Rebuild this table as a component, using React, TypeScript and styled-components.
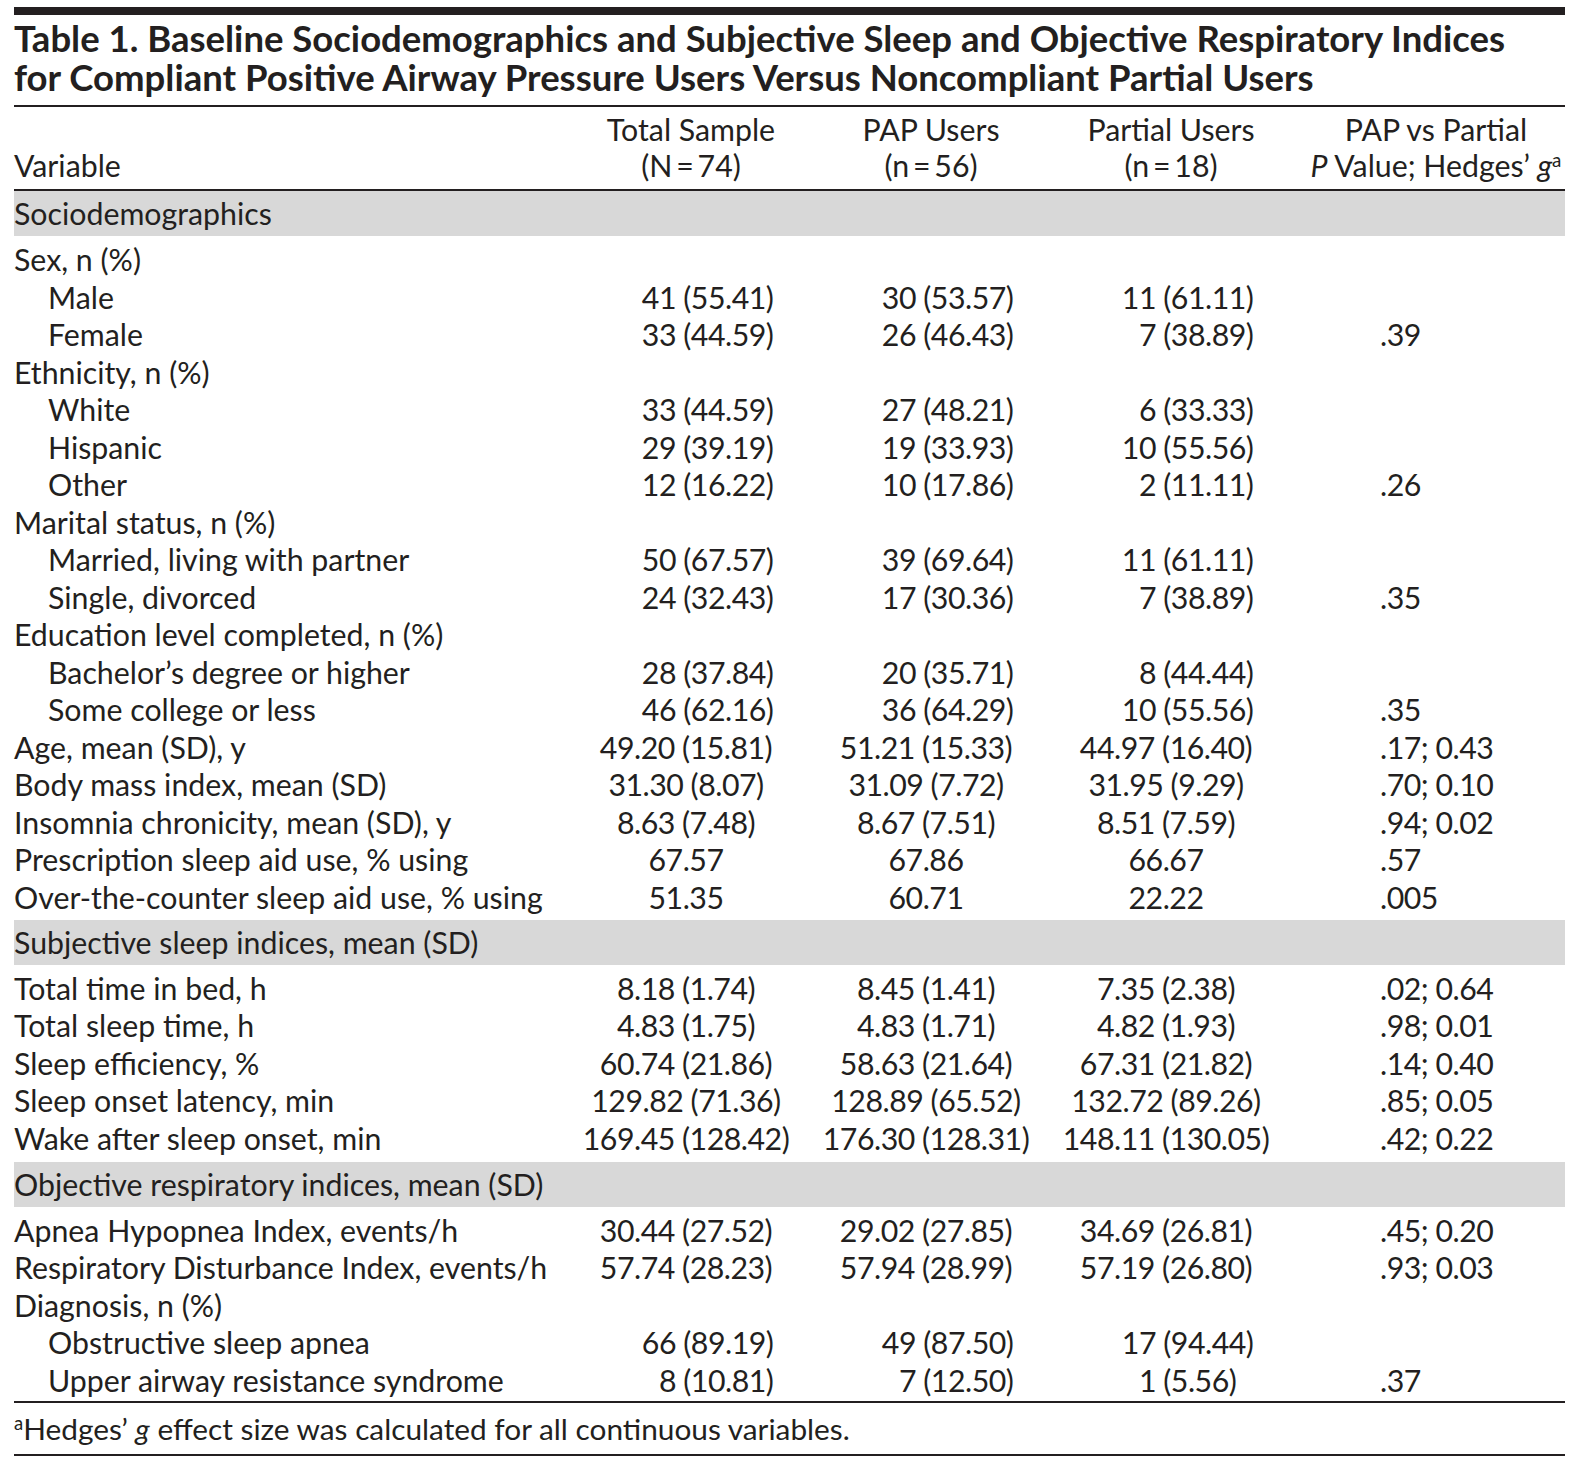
import React from "react";
import styled, { createGlobalStyle } from "styled-components";

const GlobalStyle = createGlobalStyle`
  html, body { margin: 0; padding: 0; background: #ffffff; }
  body { font-family: Lato, "Open Sans", sans-serif; color: #231f20; }
`;

const COLS = "557px 240px 240px 240px 274px";

const Page = styled.div`
  width: 1551px;
  padding: 7px 0 0 14px;
`;

const TopBar = styled.div`
  height: 8px;
  background: #231f20;
`;

const Title = styled.h1`
  margin: 0;
  padding: 4px 0 8px;
  font-family: Lato, sans-serif;
  font-weight: 700;
  font-size: 36.5px;
  line-height: 39px;
  white-space: nowrap;
`;

const TitleLine = styled.span`
  display: block;
`;

const Rule = styled.div<{ $h?: number }>`
  height: ${(p) => p.$h ?? 2}px;
  background: #231f20;
`;

const HeadRow = styled.div`
  display: grid;
  grid-template-columns: ${COLS};
  align-items: end;
  padding: 4px 0 6px;
  font-size: 30.3px;
  line-height: 36px;
`;

const HeadCell = styled.div<{ $shift?: number }>`
  text-align: center;
  white-space: nowrap;
  padding-left: ${(p) => (p.$shift && p.$shift > 0 ? p.$shift * 2 : 0)}px;
  padding-right: ${(p) => (p.$shift && p.$shift < 0 ? -p.$shift * 2 : 0)}px;
`;

const HeadLabel = styled.div`
  text-align: left;
`;

const Sup = styled.sup`
  font-size: 0.62em;
  line-height: 0;
  vertical-align: 0.55em;
`;

const Band = styled.div`
  height: 45px;
  line-height: 45px;
  background: #d8d8d8;
  font-size: 30.3px;
  white-space: nowrap;
`;

const SectionBody = styled.div<{ $bottom: number }>`
  padding: 5px 0 ${(p) => p.$bottom}px;
`;

const DataRow = styled.div`
  display: grid;
  grid-template-columns: ${COLS};
  height: 37.5px;
  line-height: 37.5px;
  font-size: 30.3px;
  white-space: nowrap;
`;

const Label = styled.div<{ $indent: boolean }>`
  padding-left: ${(p) => (p.$indent ? 34 : 0)}px;
`;

const CenterVal = styled.div`
  text-align: center;
  padding-right: 10px;
  letter-spacing: -0.5px;
`;

const SplitVal = styled.div`
  display: flex;
  letter-spacing: -0.5px;
`;

const SplitLeft = styled.span`
  display: inline-block;
  width: 105px;
  text-align: right;
`;

const SplitRight = styled.span`
  padding-left: 0.24em;
`;

const PVal = styled.div`
  padding-left: 89px;
  letter-spacing: -0.5px;
`;

const Footnote = styled.div`
  font-size: 29.8px;
  line-height: 51px;
  white-space: nowrap;
`;

type Row = {
  label: string;
  indent?: boolean;
  vals?: [string, string, string];
  p?: string;
};

type Section = { title: string; rows: Row[]; bottom: number };

const sections: Section[] = [
  {
    title: "Sociodemographics",
    bottom: 3.5,
    rows: [
      { label: "Sex, n (%)" },
      { label: "Male", indent: true, vals: ["41 (55.41)", "30 (53.57)", "11 (61.11)"] },
      { label: "Female", indent: true, vals: ["33 (44.59)", "26 (46.43)", "7 (38.89)"], p: ".39" },
      { label: "Ethnicity, n (%)" },
      { label: "White", indent: true, vals: ["33 (44.59)", "27 (48.21)", "6 (33.33)"] },
      { label: "Hispanic", indent: true, vals: ["29 (39.19)", "19 (33.93)", "10 (55.56)"] },
      { label: "Other", indent: true, vals: ["12 (16.22)", "10 (17.86)", "2 (11.11)"], p: ".26" },
      { label: "Marital status, n (%)" },
      { label: "Married, living with partner", indent: true, vals: ["50 (67.57)", "39 (69.64)", "11 (61.11)"] },
      { label: "Single, divorced", indent: true, vals: ["24 (32.43)", "17 (30.36)", "7 (38.89)"], p: ".35" },
      { label: "Education level completed, n (%)" },
      { label: "Bachelor\u2019s degree or higher", indent: true, vals: ["28 (37.84)", "20 (35.71)", "8 (44.44)"] },
      { label: "Some college or less", indent: true, vals: ["46 (62.16)", "36 (64.29)", "10 (55.56)"], p: ".35" },
      { label: "Age, mean (SD), y", vals: ["49.20 (15.81)", "51.21 (15.33)", "44.97 (16.40)"], p: ".17; 0.43" },
      { label: "Body mass index, mean (SD)", vals: ["31.30 (8.07)", "31.09 (7.72)", "31.95 (9.29)"], p: ".70; 0.10" },
      { label: "Insomnia chronicity, mean (SD), y", vals: ["8.63 (7.48)", "8.67 (7.51)", "8.51 (7.59)"], p: ".94; 0.02" },
      { label: "Prescription sleep aid use, % using", vals: ["67.57", "67.86", "66.67"], p: ".57" },
      { label: "Over-the-counter sleep aid use, % using", vals: ["51.35", "60.71", "22.22"], p: ".005" },
    ],
  },
  {
    title: "Subjective sleep indices, mean (SD)",
    bottom: 4.75,
    rows: [
      { label: "Total time in bed, h", vals: ["8.18 (1.74)", "8.45 (1.41)", "7.35 (2.38)"], p: ".02; 0.64" },
      { label: "Total sleep time, h", vals: ["4.83 (1.75)", "4.83 (1.71)", "4.82 (1.93)"], p: ".98; 0.01" },
      { label: "Sleep efficiency, %", vals: ["60.74 (21.86)", "58.63 (21.64)", "67.31 (21.82)"], p: ".14; 0.40" },
      { label: "Sleep onset latency, min", vals: ["129.82 (71.36)", "128.89 (65.52)", "132.72 (89.26)"], p: ".85; 0.05" },
      { label: "Wake after sleep onset, min", vals: ["169.45 (128.42)", "176.30 (128.31)", "148.11 (130.05)"], p: ".42; 0.22" },
    ],
  },
  {
    title: "Objective respiratory indices, mean (SD)",
    bottom: 2,
    rows: [
      { label: "Apnea Hypopnea Index, events/h", vals: ["30.44 (27.52)", "29.02 (27.85)", "34.69 (26.81)"], p: ".45; 0.20" },
      { label: "Respiratory Disturbance Index, events/h", vals: ["57.74 (28.23)", "57.94 (28.99)", "57.19 (26.80)"], p: ".93; 0.03" },
      { label: "Diagnosis, n (%)" },
      { label: "Obstructive sleep apnea", indent: true, vals: ["66 (89.19)", "49 (87.50)", "17 (94.44)"] },
      { label: "Upper airway resistance syndrome", indent: true, vals: ["8 (10.81)", "7 (12.50)", "1 (5.56)"], p: ".37" },
    ],
  },
];

function Value({ text, split }: { text: string; split: boolean }) {
  if (split) {
    const i = text.indexOf(" ");
    return (
      <SplitVal>
        <SplitLeft>{text.slice(0, i)}</SplitLeft>
        <SplitRight>{text.slice(i + 1)}</SplitRight>
      </SplitVal>
    );
  }
  return <CenterVal>{text}</CenterVal>;
}

export default function App() {
  return (
    <Page>
      <GlobalStyle />
      <TopBar />
      <Title>
        <TitleLine>
          Table 1. Baseline Sociodemographics and Subjective Sleep and Objective Respiratory Indices
        </TitleLine>
        <TitleLine>
          for Compliant Positive Airway Pressure Users Versus Noncompliant Partial Users
        </TitleLine>
      </Title>
      <Rule $h={2} />
      <HeadRow>
        <HeadLabel>Variable</HeadLabel>
        <HeadCell>
          Total Sample
          <br />
          (N{"\u2009"}={"\u2009"}74)
        </HeadCell>
        <HeadCell>
          PAP Users
          <br />
          (n{"\u2009"}={"\u2009"}56)
        </HeadCell>
        <HeadCell>
          Partial Users
          <br />
          (n{"\u2009"}={"\u2009"}18)
        </HeadCell>
        <HeadCell $shift={8}>
          PAP vs Partial
          <br />
          <i>P</i> Value; Hedges{"\u2019"} <i>g</i>
          <Sup>a</Sup>
        </HeadCell>
      </HeadRow>
      <Rule $h={2} />
      {sections.map((s) => (
        <React.Fragment key={s.title}>
          <Band>{s.title}</Band>
          <SectionBody $bottom={s.bottom}>
            {s.rows.map((r) => {
              const split = !!r.indent;
              return (
                <DataRow key={r.label}>
                  <Label $indent={!!r.indent}>{r.label}</Label>
                  {r.vals ? (
                    r.vals.map((v, i) => <Value key={i} text={v} split={split} />)
                  ) : (
                    <>
                      <div />
                      <div />
                      <div />
                    </>
                  )}
                  <PVal>{r.p ?? ""}</PVal>
                </DataRow>
              );
            })}
          </SectionBody>
        </React.Fragment>
      ))}
      <Rule $h={2} />
      <Footnote>
        <Sup>a</Sup>Hedges{"\u2019"} <i>g</i> effect size was calculated for all continuous variables.
      </Footnote>
      <Rule $h={2} />
    </Page>
  );
}
